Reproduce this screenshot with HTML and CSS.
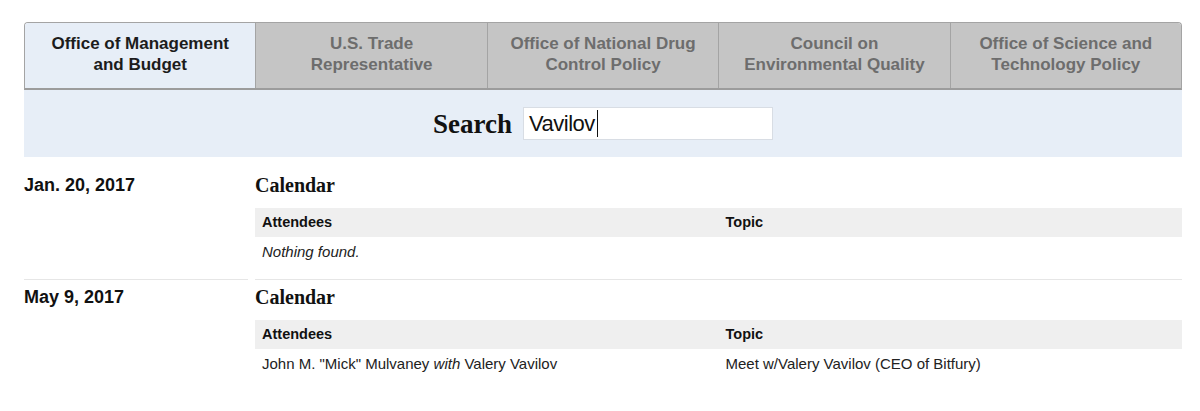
FILE: index.html
```html
<!DOCTYPE html>
<html lang="en">
<head>
<meta charset="utf-8">
<title>Visitor logs search</title>
<link rel="stylesheet" href="styles.css">
</head>
<body>
<main class="page">
  <nav class="tabs">
    <a class="tab tab-active">Office of Management<br>and Budget</a>
    <a class="tab">U.S. Trade<br>Representative</a>
    <a class="tab">Office of National Drug<br>Control Policy</a>
    <a class="tab">Council on<br>Environmental Quality</a>
    <a class="tab">Office of Science and<br>Technology Policy</a>
  </nav>
  <section class="search-band">
    <label class="search-label">Search</label>
    <div class="search-box"><span class="search-value">Vavilov</span><span class="caret"></span></div>
  </section>
  <section class="results">
    <div class="entry">
      <div class="entry-date">Jan. 20, 2017</div>
      <div class="entry-body">
        <h2 class="entry-title">Calendar</h2>
        <div class="table">
          <div class="table-head">
            <div class="cell">Attendees</div>
            <div class="cell">Topic</div>
          </div>
          <div class="table-row">
            <div class="cell"><em>Nothing found.</em></div>
            <div class="cell"></div>
          </div>
        </div>
      </div>
    </div>
    <div class="entry entry-last">
      <div class="entry-date">May 9, 2017</div>
      <div class="entry-body">
        <h2 class="entry-title">Calendar</h2>
        <div class="table">
          <div class="table-head">
            <div class="cell">Attendees</div>
            <div class="cell">Topic</div>
          </div>
          <div class="table-row">
            <div class="cell">John M. "Mick" Mulvaney <em>with</em> Valery Vavilov</div>
            <div class="cell">Meet w/Valery Vavilov (CEO of Bitfury)</div>
          </div>
        </div>
      </div>
    </div>
  </section>
</main>
</body>
</html>
```

FILE: styles.css
```css
* { box-sizing: border-box; }

html, body {
  margin: 0;
  background: #ffffff;
}

body {
  font-family: "Liberation Sans", Arial, sans-serif;
  color: #1a1a1a;
  padding: 22px 18px 0 24px;
}

.page {
  width: 1158px;
}

/* Tabs */
.tabs {
  display: flex;
  border: 1px solid #a4a4a4;
  border-bottom: 2px solid #9c9c9c;
  border-radius: 4px 4px 0 0;
  overflow: hidden;
}

.tab {
  flex: 1 1 0;
  padding: 10px 8px 13px;
  background: #c5c5c5;
  color: #6d6d6d;
  font-size: 17px;
  font-weight: bold;
  line-height: 21px;
  text-align: center;
  border-left: 1px solid #a4a4a4;
}

.tab:first-child {
  border-left: none;
}

.tab-active {
  background: #e7eef7;
  color: #1c1c1c;
}

/* Search band */
.search-band {
  display: flex;
  justify-content: center;
  align-items: center;
  gap: 11px;
  padding: 17px 0;
  background: #e7eef7;
}

.search-label {
  font-family: "Liberation Serif", "Times New Roman", serif;
  font-weight: bold;
  font-size: 27px;
  color: #111;
  padding-top: 2px;
}

.search-box {
  display: flex;
  align-items: center;
  width: 250px;
  height: 33px;
  padding: 0 5px;
  background: #ffffff;
  border: 1px solid #d8dde4;
}

.search-value {
  font-size: 22px;
  letter-spacing: -0.5px;
  color: #111;
}

.caret {
  display: block;
  width: 1px;
  height: 27px;
  margin-left: 2px;
  background: #111;
}

/* Results */
.results {
  margin-top: 11px;
}

.entry {
  display: grid;
  grid-template-columns: 224px 1fr;
  column-gap: 7px;
}

.entry-date,
.entry-body {
  padding: 5px 0 12px;
  border-bottom: 1px solid #e6e6e6;
}

.entry-last .entry-date,
.entry-last .entry-body {
  border-bottom: none;
}

.entry-date {
  font-size: 18px;
  line-height: 24px;
  font-weight: bold;
  color: #111;
}

.entry-title {
  margin: 0 0 11px;
  font-family: "Liberation Serif", "Times New Roman", serif;
  font-weight: bold;
  font-size: 20px;
  line-height: 24px;
  color: #111;
}

.table-head,
.table-row {
  display: grid;
  grid-template-columns: 1fr 1fr;
}

.table-head {
  background: #efefef;
}

.table-head .cell {
  padding: 6px 7px;
  font-size: 14.5px;
  line-height: 17px;
  font-weight: bold;
  color: #111;
}

.table-row .cell {
  padding: 5px 7px;
  font-size: 15px;
  line-height: 20px;
  color: #222;
}
```
